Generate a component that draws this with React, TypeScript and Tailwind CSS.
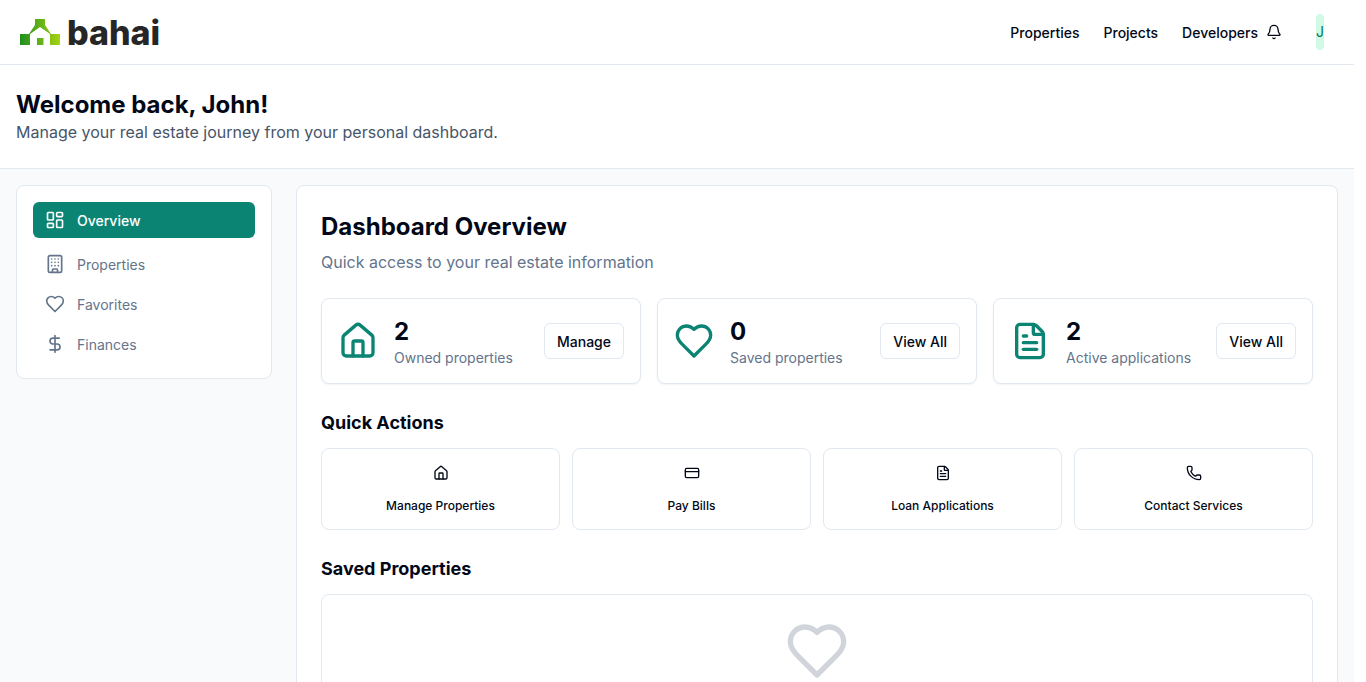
import { Bell, Building, CreditCard, DollarSign, FileText, Home, LayoutDashboard, Phone } from "lucide-react";

// pointed-bottom heart, the lucide-react one here has a rounder tip
function Heart({ className, strokeWidth = 2 }: { className?: string; strokeWidth?: number }) {
  return (
    <svg viewBox="0 0 24 24" fill="none" stroke="currentColor" strokeWidth={strokeWidth} strokeLinecap="round" strokeLinejoin="round" className={className}>
      <path d="M19 14c1.49-1.46 3-3.21 3-5.5A5.5 5.5 0 0 0 16.5 3c-1.76 0-3 .5-4.5 2-1.5-1.5-2.74-2-4.5-2A5.5 5.5 0 0 0 2 8.5c0 2.3 1.5 4.05 3 5.5l7 7Z" />
    </svg>
  );
}

const stats = [
  { icon: Home, value: "2", label: "Owned properties", action: "Manage" },
  { icon: Heart, value: "0", label: "Saved properties", action: "View All" },
  { icon: FileText, value: "2", label: "Active applications", action: "View All" },
];

const actions = [
  { icon: Home, label: "Manage Properties" },
  { icon: CreditCard, label: "Pay Bills" },
  { icon: FileText, label: "Loan Applications" },
  { icon: Phone, label: "Contact Services" },
];

const sideLinks = [
  { icon: Building, label: "Properties" },
  { icon: Heart, label: "Favorites" },
  { icon: DollarSign, label: "Finances" },
];

function Logo() {
  return (
    <div className="flex items-center">
      <svg width="40" height="27" viewBox="0 0 40 27" className="mr-[7px] mt-px">
        <defs>
          <linearGradient id="logo-grad" x1="0" y1="0" x2="1" y2="0">
            <stop offset="0" stopColor="#1f8f1f" />
            <stop offset="1" stopColor="#a6d40f" />
          </linearGradient>
        </defs>
        <path
          fill="url(#logo-grad)"
          d="M15 0H25V6L31 15H40V26H30V15L20 8L10 15V26H0V15H9L15 6Z M17 19H23.5V26H17Z"
        />
      </svg>
      <span className="mt-px text-[34px] leading-none font-extrabold text-[#262626] font-['Inter',sans-serif]">bahai</span>
    </div>
  );
}

export default function App() {
  return (
    <div className="h-[682px] w-full overflow-hidden bg-white font-['Inter',sans-serif]">
      <div className="w-[1354px] min-h-[682px] bg-[#f8fafc]">
        <header className="flex h-[65px] items-center justify-between border-b border-[#e2e8f0] bg-white pl-5 pr-[30px]">
          <Logo />
          <div className="flex items-center">
            <nav className="flex items-center gap-6 pt-px text-sm font-medium text-[#020817]">
              <a>Properties</a>
              <a>Projects</a>
              <a>Developers</a>
            </nav>
            <Bell className="ml-2 h-4 w-4 text-[#020817]" strokeWidth={2} />
            <div className="ml-[34px] flex h-9 w-2 items-center justify-center rounded-full bg-[#d1fae5] text-sm text-[#047857]">J</div>
          </div>
        </header>

        <section className="h-[104px] border-b border-[#e2e8f0] bg-white px-4 pt-6">
          <h1 className="text-2xl font-bold leading-[31px] text-[#020817]">Welcome back, John!</h1>
          <p className="text-base leading-6 text-[#475569]">Manage your real estate journey from your personal dashboard.</p>
        </section>

        <div className="flex items-start gap-6 p-4">
          <aside className="w-64 rounded-lg border border-[#e2e8f0] bg-white px-4 pb-[14px] pt-4">
            <div className="flex h-9 items-center gap-3 rounded-md bg-[#0b8474] px-3 text-sm font-medium text-white">
              <LayoutDashboard className="h-5 w-5" strokeWidth={2} />
              <span className="pt-px">Overview</span>
            </div>
            <div className="mt-[6px] flex flex-col">
              {sideLinks.map((l) => (
                <div key={l.label} className="flex h-10 items-center gap-3 px-3 text-sm text-[#64748b]">
                  <l.icon className="h-5 w-5" strokeWidth={2} />
                  <span className="pt-[2px]">{l.label}</span>
                </div>
              ))}
            </div>
          </aside>

          <main className="flex-1 rounded-lg border border-[#e2e8f0] bg-white p-6">
            <h2 className="text-2xl font-bold leading-[34px] text-[#020817]">Dashboard Overview</h2>
            <p className="mt-[6px] text-base leading-6 text-[#64748b]">Quick access to your real estate information</p>

            <div className="mt-6 grid grid-cols-3 gap-4">
              {stats.map((s) => (
                <div key={s.label} className="flex h-[86px] items-center rounded-lg border border-[#e2e8f0] bg-white px-4 shadow-xs">
                  <s.icon className="h-10 w-10 text-[#0b8474]" strokeWidth={2} />
                  <div className="ml-4 flex-1 pt-[2px]">
                    <div className="text-2xl font-bold leading-8 text-[#020817]">{s.value}</div>
                    <div className="text-sm leading-5 text-[#64748b]">{s.label}</div>
                  </div>
                  <button className="flex h-9 items-center rounded-md border border-[#e2e8f0] bg-white px-3 pt-px text-sm font-medium text-[#020817]">
                    {s.action}
                  </button>
                </div>
              ))}
            </div>

            <h3 className="mt-6 text-lg font-bold leading-[30px] text-[#020817]">Quick Actions</h3>
            <div className="mt-[10px] grid grid-cols-4 gap-3">
              {actions.map((a) => (
                <div key={a.label} className="flex h-[82px] flex-col items-center rounded-lg border border-[#e2e8f0] bg-white pt-4">
                  <a.icon className="h-4 w-4 text-[#020817]" strokeWidth={2} />
                  <span className="mt-[17px] text-xs font-medium leading-4 text-[#020817]">{a.label}</span>
                </div>
              ))}
            </div>

            <h3 className="mt-6 text-lg font-bold leading-[30px] text-[#020817]">Saved Properties</h3>
            <div className="mt-[10px] flex h-[300px] justify-center rounded-lg border border-[#e2e8f0] bg-white pt-6">
              <Heart className="h-16 w-16 text-[#d1d5db]" strokeWidth={2} />
            </div>
          </main>
        </div>
      </div>
    </div>
  );
}
